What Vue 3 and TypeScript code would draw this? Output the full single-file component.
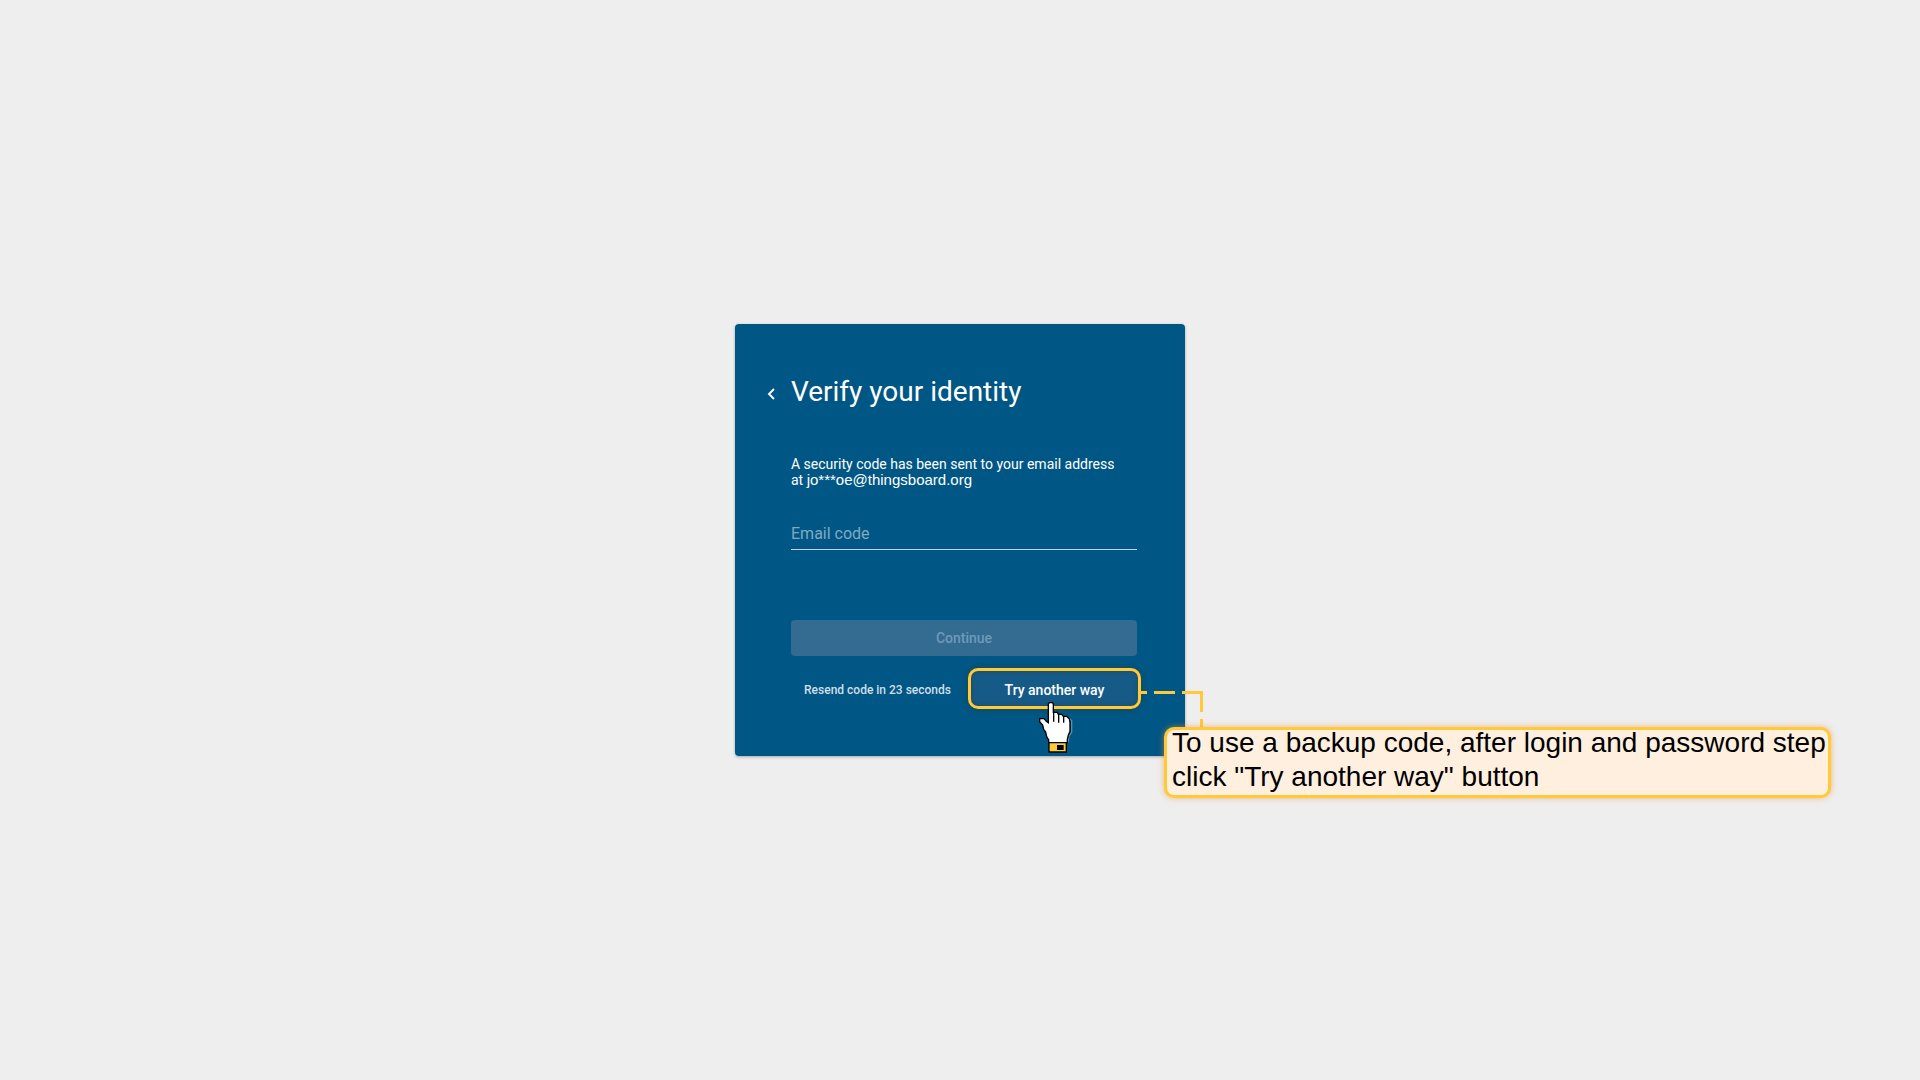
<script setup lang="ts">
import { ref } from 'vue'

const code = ref('')
const secondsLeft = ref(23)
const maskedEmail = 'jo***oe@thingsboard.org'
</script>

<template>
  <main class="page">
    <form class="card" @submit.prevent>
      <header class="heading">
        <button class="back" type="button" aria-label="Back">
          <svg width="8" height="12" viewBox="0 0 8 12" aria-hidden="true">
            <path d="M7 1 2 6l5 5" fill="none" stroke="#fff" stroke-width="1.9" />
          </svg>
        </button>
        <h1>Verify your identity</h1>
      </header>

      <p class="message">
        A security code has been sent to your email address<br />at
        <span class="email">{{ maskedEmail }}</span>
      </p>

      <input v-model="code" class="field" type="text" placeholder="Email code" aria-label="Email code" />

      <button class="continue" type="submit" disabled>Continue</button>

      <div class="actions">
        <span class="resend">Resend code in {{ secondsLeft }} seconds</span>
        <button class="another" type="button"><span>Try another way</span></button>
      </div>

      <svg class="connector" width="64" height="40" viewBox="0 0 64 40" aria-hidden="true">
        <path
          d="M0 3.5h6M13 3.5h21M41 3.5h19.500v19.500M60.500 30v10"
          fill="none"
          stroke="#ffc938"
          stroke-width="3"
        />
      </svg>

      <svg class="hand" width="36" height="53" viewBox="54 33 108 159" aria-hidden="true">
        <path
          d="M147 84 155 92V126L147 138 144 157"
          fill="none"
          stroke="#9db8c8"
          stroke-opacity=".6"
          stroke-width="4"
        />
        <path
          d="M88 38H98L100 42V67H112L115 73H125L130 79H140L148 86L150 98V124L145 136L142 148V158H86V150L80 140L77 126L71 118L68 105L59 95V86H72L79 94L85 98V42Z"
          fill="#fff"
          stroke="#000"
          stroke-width="4"
        />
        <path d="M101 65V95M116 72V98M131 78V98" fill="none" stroke="#000" stroke-width="4" />
        <path d="M87 158H139V186H87Z" fill="#ffc938" stroke="#000" stroke-width="4" />
        <path d="M111 165H131V180H111Z" fill="#000" />
      </svg>

      <aside class="callout">
        To use a backup code, after login and password step<br />click "Try another way" button
      </aside>
    </form>
  </main>
</template>

<style>
body {
  margin: 0;
  background: #eee;
}
</style>

<style scoped>
.page {
  min-height: 100vh;
  display: flex;
  align-items: center;
  justify-content: center;
  overflow: hidden;
  background: #eee;
  font-family: Roboto, sans-serif;
}

.card {
  position: relative;
  box-sizing: border-box;
  width: 450px;
  max-width: 100%;
  padding: 50px 48px 48px 56px;
  display: flex;
  flex-direction: column;
  border-radius: 4px;
  background: #005684;
  color: #fff;
  box-shadow: 0 1px 3px rgba(0, 0, 0, 0.3);
}

button {
  border: 0;
  padding: 0;
  background: none;
  font-family: inherit;
  color: inherit;
  cursor: pointer;
}

.heading {
  display: flex;
  align-items: center;
  margin-left: -24px;
  gap: 16px;
}

.back {
  display: flex;
  padding-top: 4px;
}

h1 {
  margin: 0;
  font-size: 28px;
  line-height: 36px;
  font-weight: 400;
}

.message {
  margin: 46px 0 0;
  font-size: 14px;
  line-height: 16px;
  white-space: nowrap;
}

.email {
  font-family: "Liberation Sans", sans-serif;
  font-size: 15px;
}

.field {
  box-sizing: border-box;
  width: 100%;
  height: 34px;
  margin: 28px 0 0;
  padding: 2px 0 0;
  border: 0;
  border-bottom: 1px solid #bfd5e0;
  border-radius: 0;
  outline: 0;
  background: none;
  color: #fff;
  font: 400 16px/24px Roboto, sans-serif;
}

.field::placeholder {
  color: #80aac1;
  opacity: 1;
}

.continue {
  height: 36px;
  margin-top: 70px;
  border-radius: 4px;
  background: #336b91;
  color: #6f9ab8;
  font-size: 14px;
  font-weight: 500;
}

.actions {
  display: flex;
  align-items: center;
  gap: 8px;
  margin-top: 16px;
}

.resend {
  flex: 1;
  text-align: center;
  font-size: 12px;
  font-weight: 500;
  color: #d0dfe8;
}

.another {
  position: relative;
  width: 165px;
  height: 36px;
  font-size: 14px;
  font-weight: 500;
}

.another::before {
  content: "";
  position: absolute;
  inset: -4px -4px -1px;
  border: 3px solid #ffc938;
  border-radius: 10px;
  background: #165b88;
  box-shadow: 0 0 5px rgba(60, 60, 30, 0.6), inset 0 0 5px rgba(40, 60, 60, 0.6);
}

.another span {
  position: relative;
}

.connector {
  position: absolute;
  left: 406px;
  top: 365px;
}

.hand {
  position: absolute;
  left: 303px;
  top: 377px;
}

.callout {
  position: absolute;
  left: 429px;
  top: 403px;
  box-sizing: border-box;
  width: 667px;
  height: 71px;
  padding: 0 5px;
  border: 3px solid #ffc938;
  border-radius: 10px;
  background: #ffefdf;
  box-shadow: 0 0 6px rgba(240, 150, 60, 0.6);
  color: #000;
  font: 400 28px/34px "Liberation Sans", sans-serif;
  line-height: 34px;
  display: flex;
  flex-direction: column;
  justify-content: center;
  padding-bottom: 6px;
  white-space: nowrap;
}
</style>
